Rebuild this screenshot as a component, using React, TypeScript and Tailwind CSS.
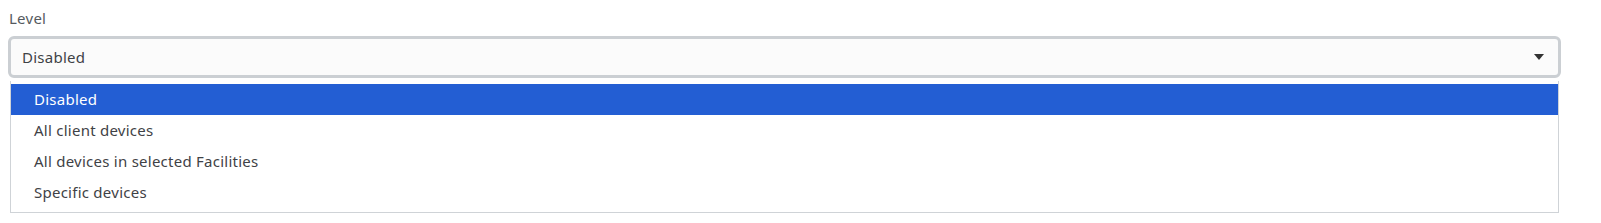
const options = [
  "Disabled",
  "All client devices",
  "All devices in selected Facilities",
  "Specific devices",
];

export default function App() {
  const selected = "Disabled";

  return (
    <div
      className="h-[223px] w-full bg-white px-2 pt-[8px] tracking-[0.25px] text-[#3f4246]"
      style={{ fontFamily: "'Noto Sans', 'Open Sans', sans-serif" }}
    >
      <label className="block pl-px text-[15px] leading-[20px] text-[#555a60]">Level</label>

      <div className="relative mt-[8px] w-[1553px]">
        <div className="flex h-[42px] items-center rounded-[6px] border-[3px] border-[#cbcfd3] bg-[#fbfbfb] pl-[11px] pr-[14px] text-[15px] text-[#3f4246]">
          <span className="flex-1">{selected}</span>
          <svg width="10" height="6" viewBox="0 0 10 6" className="text-[#333]">
            <path d="M0 0h10L5 6z" fill="currentColor" />
          </svg>
        </div>

        <ul className="ml-[2px] mt-[3px] w-[1549px] border border-t-0 border-[#cfd3d7] bg-white pt-[3px] pb-[4px] text-[15px]">
          {options.map((opt) => (
            <li
              key={opt}
              className={
                opt === selected
                  ? "flex h-[31px] items-center bg-[#235ed3] pl-[23px] text-white"
                  : "flex h-[31px] items-center pl-[23px] text-[#3f4246]"
              }
            >
              {opt}
            </li>
          ))}
        </ul>
      </div>
    </div>
  );
}
